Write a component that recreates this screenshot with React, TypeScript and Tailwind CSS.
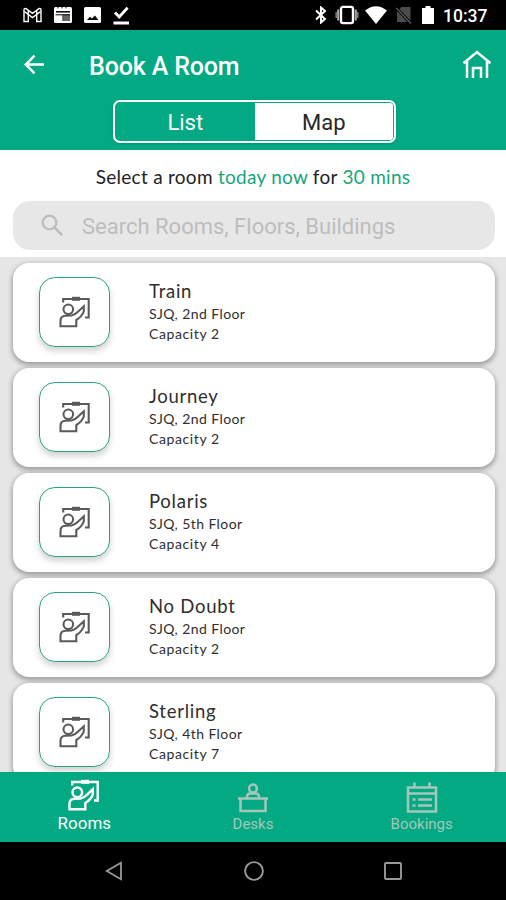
import React from 'react';

const rooms = [
  { name: 'Train', location: 'SJQ, 2nd Floor', capacity: 2 },
  { name: 'Journey', location: 'SJQ, 2nd Floor', capacity: 2 },
  { name: 'Polaris', location: 'SJQ, 5th Floor', capacity: 4 },
  { name: 'No Doubt', location: 'SJQ, 2nd Floor', capacity: 2 },
  { name: 'Sterling', location: 'SJQ, 4th Floor', capacity: 7 },
];

const RoomIcon: React.FC<{ className?: string }> = ({ className }) => (
  <svg viewBox="0 0 32 32" className={className} fill="none" stroke="currentColor">
    <path d="M4.2 6.5V3H29.7V21.5H26" />
    <path d="M13 2.8H21" strokeWidth="4" />
    <circle cx="9.3" cy="13.3" r="4.8" />
    <path d="M1.5 30.3V25Q1.5 20 6.5 19.8L12.5 19.5Q15.5 19 18 16.5L24.8 10.3V15.5Q23 20.5 17.3 24V30.3Z" />
  </svg>
);

const DeskIcon: React.FC = () => (
  <svg viewBox="0 0 30 30" className="h-[30px] w-[30px]" fill="none" stroke="currentColor" strokeWidth="2.5">
    <circle cx="15" cy="5.5" r="3.9" />
    <path d="M9 15V14Q9 10.5 12.3 10.5H17.7Q21 10.5 21 14V15" />
    <path d="M0 15.5H30M2.5 16V28H27.5V16" />
  </svg>
);

const BookingsIcon: React.FC = () => (
  <svg viewBox="0 0 32 32" className="h-8 w-8" fill="none" stroke="currentColor" strokeWidth="2.5">
    <path d="M2 5.5H30V29.5H2ZM2 11.5H30" />
    <path d="M8.5 .5V6M23.5 .5V6" />
    <path d="M6.5 17.5H9.5M12 17.5H26M6.5 23.5H9.5M12 23.5H26" />
  </svg>
);

const StatusBar: React.FC = () => (
  <div className="flex h-[30px] shrink-0 items-center justify-between bg-black pl-[23px] pr-[18px] text-white">
    <div className="flex items-center gap-[12px]">
      <svg viewBox="0 0 19 16" className="h-4 w-[19px]" fill="none" stroke="currentColor" strokeWidth="1.4">
        <path d="M1 14.5V3Q1 1.3 2.8 1.4L9.5 6.4L16.2 1.4Q18 1.3 18 3V14.5H13.7V7.4L9.5 10.6L5.3 7.4V14.5Z" />
        <path d="M5.3 3.3V7.4M13.7 3.3V7.4M1.4 4.5L5.3 7.4M17.6 4.5L13.7 7.4" />
      </svg>
      <svg viewBox="0 0 18 16" className="h-4 w-[18px]">
        <rect width="18" height="16" rx="1.5" fill="currentColor" />
        <path d="M2 4.8H16" stroke="black" strokeWidth="1.5" />
        <path d="M2 7.5H8V14H2Z" fill="white" />
        <path d="M9.5 7.5H16V14H9.5Z" fill="#666" />
        <path d="M1.5 7.8H16M9 8V14" stroke="black" strokeWidth="1" />
        <path d="M4 0V1.4M8 0V1.4M12 0V1.4" stroke="black" strokeWidth="1" />
      </svg>
      <svg viewBox="0 0 17 16" className="h-4 w-[17px]">
        <rect width="17" height="16" rx="1.5" fill="currentColor" />
        <path d="M3 13L6 9.7L8 11.5L11 8.5L14.3 13Z" fill="black" />
      </svg>
      <svg viewBox="0 0 17 19" className="h-[19px] w-[17px]" fill="none" stroke="currentColor" strokeWidth="2.8">
        <path d="M2 6.5L6.2 11L14.6 1.8M.5 17H16" />
      </svg>
    </div>
    <div className="flex items-center">
      <svg viewBox="0 0 12 18" className="h-[18px] w-3" fill="none" stroke="currentColor" strokeWidth="2">
        <path d="M1 4.5L10 13L6 16.5V1.5L10 5L1 13.5" />
      </svg>
      <svg viewBox="0 0 24 20" className="ml-[8px] h-5 w-6" fill="none">
        <rect x="6" y="1.9" width="12" height="16.2" rx="2" stroke="currentColor" strokeWidth="2.4" />
        <path d="M3.2 4.5V15.5M20.8 4.5V15.5" stroke="#aaa" strokeWidth="2" />
        <path d="M1.2 7V13M22.8 7V13" stroke="#777" strokeWidth="1.6" />
      </svg>
      <svg viewBox="0 0 22 18" className="ml-[6px] h-[18px] w-[22px]" fill="currentColor">
        <path d="M0 4.5Q11-4 22 4.5L11 18Z" />
      </svg>
      <svg viewBox="0 0 16 18" className="ml-[9px] h-[18px] w-4">
        <path d="M5.5 1H14.5V16H1V5.5Z" fill="#4b4b4b" />
        <path d="M.3 2L15 17.5" stroke="black" strokeWidth="3" />
        <path d="M.3 2L15 17.5" stroke="#606060" strokeWidth="1.2" />
      </svg>
      <svg viewBox="0 0 12 18" className="ml-[10px] h-[18px] w-3" fill="currentColor">
        <path d="M3.5 0H8.5V2H12V18H0V2H3.5Z" />
      </svg>
      <span className="ml-[9px] w-[45px] whitespace-nowrap pt-[3px] text-[17.5px] font-medium leading-none">10:37</span>
    </div>
  </div>
);

const Header: React.FC = () => (
  <header className="h-[120px] shrink-0 bg-[#02a982] text-white">
    <div className="flex h-[70px] items-center pl-6 pr-[14px]">
      <svg viewBox="0 0 20 20" className="h-5 w-5" fill="none" stroke="currentColor" strokeWidth="2.5">
        <path d="M20 9.5H1.8M10.5 .7L1.8 9.5L10.5 18.3" />
      </svg>
      <h1 className="ml-[45px] flex-1 pt-[2px] text-[25px] font-medium leading-none tracking-[-0.15px]">Book A Room</h1>
      <svg viewBox="0 0 30 30" className="h-[30px] w-[30px]" fill="none" stroke="currentColor" strokeWidth="2.5">
        <path d="M1.5 13.2L15 2L28.5 13.2M5 11V28M25 11V28M11 28V18H19V28" />
      </svg>
    </div>
    <div className="ml-[113px] flex h-[43px] w-[283px] rounded-[7px] border-[2.5px] border-white bg-[#02a982] p-px text-[22px] shadow">
      <button className="flex-1 rounded-l-[4px] pt-[2px]">List</button>
      <button className="flex-1 rounded-r-[3px] bg-white pt-[2px] text-[#282828]">Map</button>
    </div>
  </header>
);

const RoomCard: React.FC<{ room: (typeof rooms)[number] }> = ({ room }) => (
  <div className="flex h-[99px] shrink-0 rounded-[16px] bg-white pl-[26px] pt-[14px] shadow-[0_2px_5px_1px_rgba(0,0,0,0.32)]">
    <div className="flex h-[70px] w-[71px] items-center justify-center rounded-[16px] border border-[#2aa27e] shadow-[0_4px_6px_rgba(0,0,0,0.18)]">
      <RoomIcon className="h-8 w-8 stroke-[2.1] text-[#5a5a5a]" />
    </div>
    <div className="ml-[39px] pt-px font-['Lato',sans-serif] text-[#2e2e2e]">
      <h2 className="pt-px text-[18.5px] leading-[25px] tracking-[0.75px]">{room.name}</h2>
      <p className="text-[14px] leading-5 tracking-[0.42px]">{room.location}</p>
      <p className="text-[14px] leading-5 tracking-[0.6px]">Capacity {room.capacity}</p>
    </div>
  </div>
);

const App: React.FC = () => (
  <div className="flex h-[900px] w-[506px] flex-col overflow-hidden bg-white font-['Roboto',sans-serif]">
    <StatusBar />
    <Header />

    <section className="h-[107px] shrink-0 pl-[13px] pr-[11px] pt-[14px]">
      <p className="whitespace-nowrap pr-[2px] text-center font-['Lato',sans-serif] text-[19px] leading-[26px] tracking-[0.27px] text-[#222]">
        Select a room <span className="text-[#16a67c]">today now</span> for <span className="text-[#16a67c]">30 mins</span>
      </p>
      <div className="mt-[11px] flex h-[49px] items-center rounded-[17px] bg-[#e7e7e7] pl-[28px] text-[#bdbdbd]">
        <svg viewBox="0 0 23 23" className="h-[23px] w-[23px]" fill="none" stroke="currentColor" strokeWidth="2.3">
          <circle cx="8.5" cy="8.5" r="6.8" />
          <path d="M13.5 13.5L21.3 21.3" strokeWidth="2.6" />
        </svg>
        <span className="ml-[18px] pt-px text-[22px]">Search Rooms, Floors, Buildings</span>
      </div>
    </section>

    <main className="flex h-[515px] shrink-0 flex-col gap-[6px] overflow-hidden bg-[#e6e6e6] pl-[13px] pr-[11px] pt-[6px]">
      {rooms.map((room) => (
        <RoomCard key={room.name} room={room} />
      ))}
    </main>

    <nav className="grid h-[70px] shrink-0 grid-cols-3 bg-[#02a982]">
      <div className="flex flex-col items-center pt-[7px] text-white">
        <RoomIcon className="h-8 w-8 stroke-[2.4]" />
        <span className="mt-[2px] text-[17px] leading-5">Rooms</span>
      </div>
      <div className="flex flex-col items-center pt-[11px] text-[#a7c6bb]">
        <DeskIcon />
        <span className="mt-px text-[15px] leading-5">Desks</span>
      </div>
      <div className="flex flex-col items-center pt-[10px] text-[#a7c6bb]">
        <BookingsIcon />
        <span className="text-[15px] leading-5">Bookings</span>
      </div>
    </nav>

    <div className="flex h-[58px] shrink-0 items-center bg-black pl-[105px] text-[#999]">
      <svg viewBox="0 0 18 20" className="h-5 w-[18px]" fill="none" stroke="currentColor" strokeWidth="1.8">
        <path d="M16 1.8V18.2L1.8 10Z" />
      </svg>
      <svg viewBox="0 0 20 20" className="ml-[121px] h-5 w-5" fill="none" stroke="currentColor" strokeWidth="1.9">
        <circle cx="10" cy="10" r="8.9" />
      </svg>
      <svg viewBox="0 0 18 18" className="ml-[120px] h-[18px] w-[18px]" fill="none" stroke="currentColor" strokeWidth="1.9">
        <rect x="1" y="1" width="16" height="16" rx="1" />
      </svg>
    </div>
  </div>
);

export default App;
